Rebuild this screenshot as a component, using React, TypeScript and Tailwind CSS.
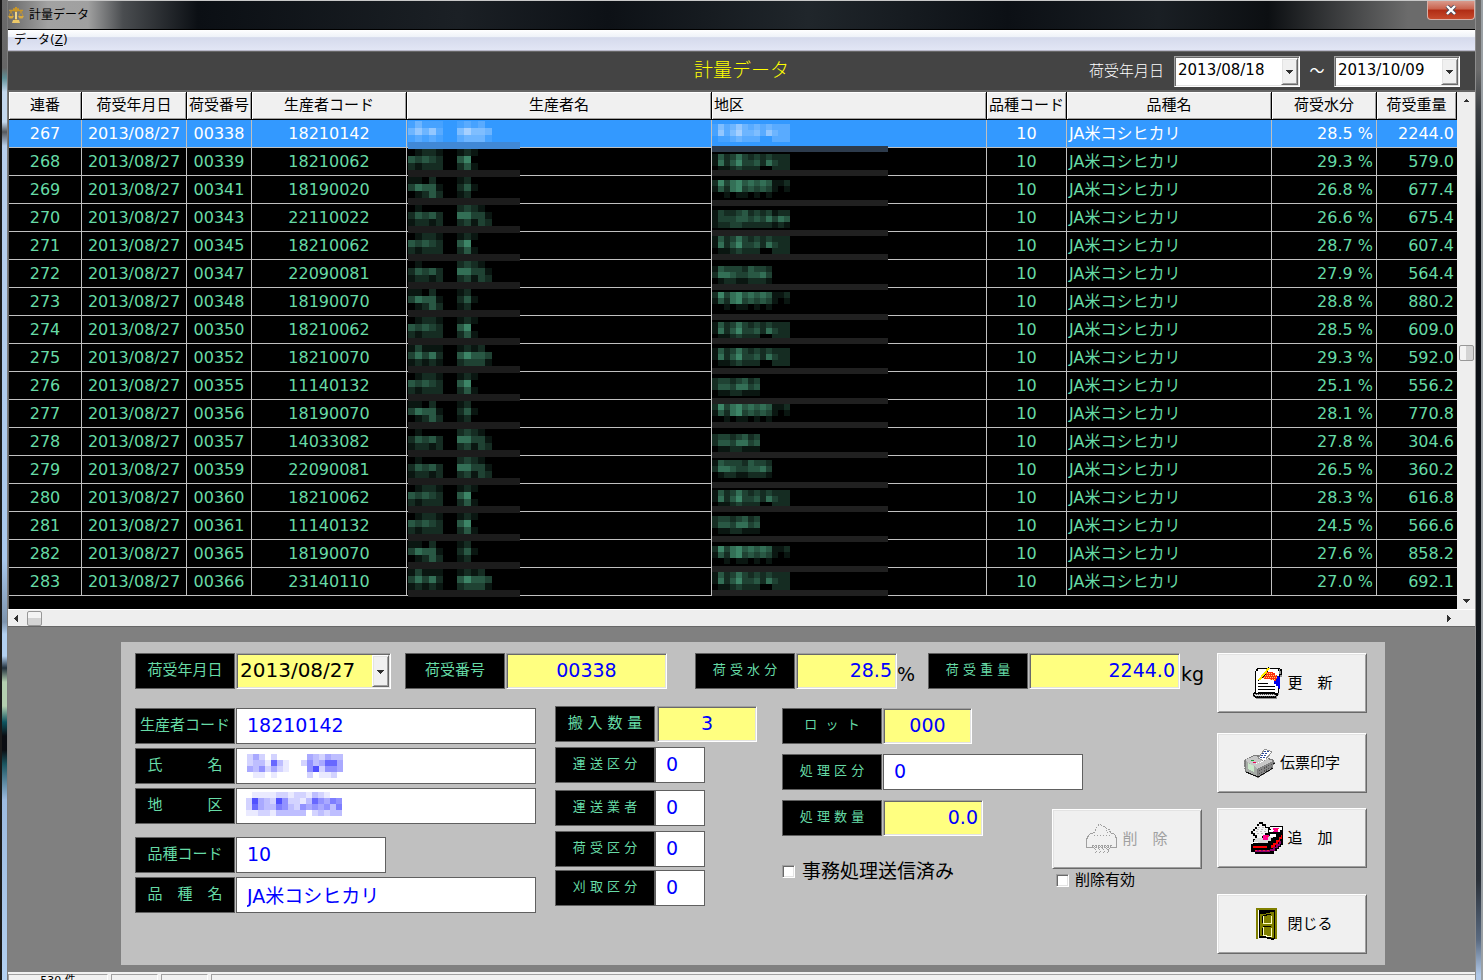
import type { ReactNode } from "react";

const rows = [
  { no: 267, code: "00338", producer: "18210142", moisture: "28.5", weight: "2244.0", name: "b", area: "long" },
  { no: 268, code: "00339", producer: "18210062", moisture: "29.3", weight: "579.0", name: "a", area: "long" },
  { no: 269, code: "00341", producer: "18190020", moisture: "26.8", weight: "677.4", name: "c", area: "mid" },
  { no: 270, code: "00343", producer: "22110022", moisture: "26.6", weight: "675.4", name: "d", area: "wide" },
  { no: 271, code: "00345", producer: "18210062", moisture: "28.7", weight: "607.4", name: "a", area: "long" },
  { no: 272, code: "00347", producer: "22090081", moisture: "27.9", weight: "564.4", name: "d", area: "semi" },
  { no: 273, code: "00348", producer: "18190070", moisture: "28.8", weight: "880.2", name: "c", area: "mid" },
  { no: 274, code: "00350", producer: "18210062", moisture: "28.5", weight: "609.0", name: "a", area: "long" },
  { no: 275, code: "00352", producer: "18210070", moisture: "29.3", weight: "592.0", name: "b", area: "long" },
  { no: 276, code: "00355", producer: "11140132", moisture: "25.1", weight: "556.2", name: "a", area: "short" },
  { no: 277, code: "00356", producer: "18190070", moisture: "28.1", weight: "770.8", name: "c", area: "mid" },
  { no: 278, code: "00357", producer: "14033082", moisture: "27.8", weight: "304.6", name: "d", area: "short" },
  { no: 279, code: "00359", producer: "22090081", moisture: "26.5", weight: "360.2", name: "d", area: "semi" },
  { no: 280, code: "00360", producer: "18210062", moisture: "28.3", weight: "616.8", name: "a", area: "long" },
  { no: 281, code: "00361", producer: "11140132", moisture: "24.5", weight: "566.6", name: "a", area: "short" },
  { no: 282, code: "00365", producer: "18190070", moisture: "27.6", weight: "858.2", name: "c", area: "mid" },
  { no: 283, code: "00366", producer: "23140110", moisture: "27.0", weight: "692.1", name: "b", area: "long" },
];

// Masked text: every digit is the strength of one cell
const masks: Record<string, string[]> = {
  a: ["012210012100", "434320046000", "212220024100"],
  b: ["131110012120", "353520046443", "121210023331"],
  c: ["110200012000", "354410024100", "012420012000"],
  d: ["010000023210", "243420055331", "122120023132"],
  long: ["1423532323222", "1524633425322", "0112322200222"],
  mid: ["2635645454112", "1425634343101", "0010110101000"],
  wide: ["1322342323122", "1333443435354", "1223322222121"],
  semi: ["1433324332", "2554334453", "0122112221"],
  short: ["23323423", "24435534", "01122111"],
  nameField: ["2420200000432433", "2331731002534774", "4352421000582554", "0110100000201120"],
  areaField: ["0111122122132100", "2843285221375465", "2743365325454536", "1122133333023233"],
};

const columns = [
  { title: "連番", width: "w-[73px]" },
  { title: "荷受年月日", width: "w-[105px]" },
  { title: "荷受番号", width: "w-[65px]" },
  { title: "生産者コード", width: "w-[155px]" },
  { title: "生産者名", width: "" },
  { title: "地区", width: "w-[275px]" },
  { title: "品種コード", width: "w-[80px]" },
  { title: "品種名", width: "w-[205px]" },
  { title: "荷受水分", width: "w-[105px]" },
  { title: "荷受重量", width: "w-[80px]" },
];

const sunken =
  "border border-t-[#a0a0a0] border-l-[#a0a0a0] border-r-white border-b-white shadow-[inset_1px_1px_0_#696969,inset_-1px_-1px_0_#e3e3e3]";
const raised =
  "border border-t-white border-l-white border-r-[#696969] border-b-[#696969] shadow-[inset_1px_1px_0_#e3e3e3,inset_-1px_-1px_0_#a0a0a0]";

const Mosaic = ({ mask, size, color, top = 0 }: { mask: string; size: number; color: string; top?: number }) => (
  <g fill={color}>
    {masks[mask].flatMap((line, y) =>
      line.split("").map((v, x) =>
        v === "0" ? null : (
          <rect key={`${x}-${y}`} x={x * size} y={top + y * size} width={size} height={size} opacity={Number(v) / 9} />
        )
      )
    )}
  </g>
);

const MaskedName = ({ mask, selected }: { mask: string; selected: boolean }) => (
  <svg width="112" height="29" className="absolute left-px top-0 overflow-visible" shapeRendering="crispEdges">
    <Mosaic mask={mask} size={7} top={1} color={selected ? "#e0ecff" : "#5cc79a"} />
    <rect y="22" width="112" height="7" fill={selected ? "#4088d6" : "#1c1c1c"} />
  </svg>
);

const MaskedArea = ({ mask, index }: { mask: string; index: number }) => (
  <svg width="176" height="33" className="absolute left-0 top-0 overflow-visible" shapeRendering="crispEdges">
    <Mosaic mask={mask} size={6} top={4 + 2 * (index % 2)} color={index === 0 ? "#e0ecff" : "#5cc79a"} />
    <rect y={27 - ((145 + 28 * index) % 6)} width="176" height="6" fill={index === 0 ? "#2d3b4c" : "#202020"} />
  </svg>
);

const ScaleIcon = () => (
  <svg width="16" height="16" viewBox="0 0 16 16" fill="none" stroke="#c8962a">
    <path d="M8 0v14" strokeWidth="2" />
    <path d="M1 3.500h14M5 2h6" strokeWidth="1.500" />
    <path d="M3 4L1 9M3 4l2 5M13 4l-2 5M13 4l2 5" strokeWidth="0.8" />
    <path d="M0 9h6l-1.500 2.500h-3zM10 9h6l-1.500 2.500h-3z" fill="#d9a93c" stroke="none" />
    <path d="M5 13h6l1 3H4z" fill="#ecc868" stroke="none" />
    <path d="M7 5h2v7H7z" fill="#f1d68a" stroke="none" />
  </svg>
);

const UpdateIcon = () => (
  <svg width="32" height="32" viewBox="0 0 32 32" shapeRendering="crispEdges">
    <path d="M8 3h23v7h-3v18h-2v5H5v-3H2v-3h3V4h1z" fill="#909090" />
    <path d="M6 1h23v1h2v6h-2v2h-1v16h-1v3h-2v2H4v-1H3v-1H2v-3h1v-1h1V4h1V2h1z" fill="#000" />
    <path d="M7 2h20v2h1v22h-2V26H5V4h2z" fill="#fff" />
    <path d="M28 2h1v2h1v3h-2z" fill="#909090" />
    <path d="M3 27h21v1h1v1H4z" fill="#c0c0c0" />
    <path d="M5 27.500h19M5 29.500h19" stroke="#444" strokeDasharray="1 1" />
    <path d="M4 28.500h20" stroke="#eee" />
    <path d="M7 16.500h10M7 19.500h17M7 22.500h17M7 25.500h17" stroke="#000" />
    <path d="M27 9v17" stroke="#000" />
    <path d="M13 5h9v1h2v2h2v2h1v4h-4v-1h-4v-1h-6v-1h-2V9h1V7h1z" fill="#ff2a10" />
    <path d="M14 6.500h8M12 8.500h14M11 10.500h15M19 12.500h7" stroke="#ffd860" strokeDasharray="1 1" />
    <path d="M26 9h2v1h1v12h-1v-1h-1v-2h-2v-2h-2v-3h2v-2h1z" fill="#0000f0" />
    <path d="M7 14L18 0M10 12L17 4" stroke="#000" strokeWidth="1" />
    <path d="M8 13L18 1" stroke="#ffe800" strokeWidth="2" />
  </svg>
);

const PrinterIcon = () => (
  <svg width="32" height="32" viewBox="0 0 32 32" shapeRendering="crispEdges">
    <path d="M0 13l10-5h7l13 5v2l2 1-3 2v4l-15 9L1 25z" fill="#7c7c7c" />
    <path d="M1 13l9-4 12 2 7 3-16 8L4 16z" fill="#c8c8c8" />
    <path d="M2 14l11 7v8L2 24z" fill="#a8aca8" />
    <path d="M4 16l6 3v6l-6-3z" fill="#c9e8c9" />
    <path d="M14 22l15-8v7l-15 9z" fill="#858585" />
    <path d="M15 24l13-7M15 27l13-7" stroke="#555" strokeDasharray="1 1" />
    <path d="M14 11l7-9 7 3-8 9z" fill="#fff" stroke="#909090" />
    <path d="M20 4.500h5M18 6.500h6M17 8.500h5M16 10.500h5" stroke="#2a4a9a" strokeWidth="1" strokeDasharray="2 1" />
    <path d="M2 25l12 5 15-9M29 17l2-1" stroke="#111" fill="none" />
    <path d="M0 13v10" stroke="#888" strokeDasharray="1 1" />
    <path d="M7 13h3v1H7z" fill="#18a030" />
    <path d="M9 15h3v1H9z" fill="#f00050" />
    <path d="M12 17l7-3 6-3" stroke="#fff" fill="none" strokeDasharray="1 1" />
  </svg>
);

const AddIcon = () => (
  <svg width="32" height="32" viewBox="0 0 32 32" shapeRendering="crispEdges">
    <path d="M8 0h4v2h3v3h4V4h13v19h-2v2h-2v2h-2v2h-3v3H4v-2H0v-8h2v-5h2v-3H2v-2H0V9h2V7h2V5h2V2h2z" fill="#000" />
    <path d="M8 2h3v2h3v2h3v5h-3v3h-3v2H6v-3H4v-2H2V9h2V7h2V4h2z" fill="#f4f4f4" />
    <path d="M7 5.500h7M6 7.500h9M5 9.500h11M6 11.500h7" stroke="#c0c0c0" strokeDasharray="2 2" />
    <path d="M19 5h12v3h-2v2H18V8h2z" fill="#fff" />
    <path d="M22 6h6v1h-1v3h-5V9h1z" fill="#ff0090" />
    <path d="M4 16h8v-2h10v2h-2v3h-3v2H3v-3h1z" fill="#d8d8d8" />
    <path d="M12 13h6v2h-1v3h-5z" fill="#ff0090" />
    <path d="M15 14h2v1h-2zM25 7h2v1h-2z" fill="#f22" />
    <path d="M2 20h5v1H2zM19 12h6v3h-6z" fill="#fff" />
    <path d="M2 24h14v2H2zM20 23h2v-2h3v-3h3v-3h2v-2h1v4h-2v3h-2v3h-3v3h-4z" fill="#f00" />
    <path d="M4 28h15v2H4zM19 27h3v-2h3v-3h3v-3h2v3h-1v2h-2v2h-3v3h-5z" fill="#900070" />
    <path d="M4 28.500h14" stroke="#f02040" strokeDasharray="2 2" />
  </svg>
);

const DoorIcon = () => (
  <svg width="32" height="32" viewBox="0 0 32 32" shapeRendering="crispEdges">
    <path d="M5 0h21v31h-2V2H7v29H5z" fill="#808000" />
    <path d="M7 2h17v29h-1v1h-3v-1h-4v-1H8z" fill="#000" />
    <path d="M7 2h1v28H7z" fill="#fff" />
    <path d="M9 6h6V5h4V4h4v26h-3v-1h-4v-1H9z" fill="#808000" />
    <path d="M11.500 8v7M11.500 7.500h4M15 6.500h5M11.500 20v7M12 18.500h8" fill="none" stroke="#000" />
    <path d="M12 15.500h8.500v-8M12 8v8M12 27.500h3v1h5.500v-9M12 19v9" fill="none" stroke="#ffffc0" />
  </svg>
);

const ShredderIcon = () => (
  <svg width="32" height="32" viewBox="0 0 32 32" fill="none" stroke="#a0a0a0" shapeRendering="crispEdges">
    <path d="M7.500 10.500L12.500 1.500h2l10 6v3" strokeDasharray="2 1" />
    <path d="M7 10.500H4.500l-2 2-2 4v8h5M25 10.500h2.500l2 2 1 4v8h-5" />
    <path d="M8 12.500h16M20 7.500h3v2h-3" strokeDasharray="1 2" />
    <path d="M6 22.500h20M6 24.500h20" strokeDasharray="2 1" />
    <path d="M6 23.500h20" strokeDasharray="1 1" />
    <path d="M8 25l3 3-3 3M12 25l3 3-3 3M16 25l3 3-3 3M20 25l3 3-3 3M24 25l-2 3 3 3" strokeDasharray="1 1" />
  </svg>
);

const Arrow = ({ d, className = "" }: { d: string; className?: string }) => (
  <svg width="9" height="9" viewBox="0 0 9 9" className={className} fill="#303030" shapeRendering="crispEdges">
    <path d={d} />
  </svg>
);

const DateSelect = ({ id, value, className, selectClass }: { id: string; value: string; className: string; selectClass: string }) => (
  <div className={`relative flex ${sunken} ${className}`}>
    <select id={id} defaultValue={value} className={`w-full appearance-none bg-transparent pl-[3px] text-black outline-none ${selectClass}`}>
      <option>{value}</option>
    </select>
    <span className={`pointer-events-none absolute bottom-px right-px top-px flex w-[17px] items-center justify-center bg-[#f0f0f0] ${raised}`}>
      <Arrow d="M1 3h7v1H7v1H6v1H5v1H4V6H3V5H2V4H1z" />
    </span>
  </div>
);

type FieldProps = {
  id: string;
  label: string;
  value?: string;
  small?: boolean;
  yellow?: boolean;
  gap?: string;
  width: string;
  align?: string;
  children?: ReactNode;
};

const FieldLabel = ({ id, label, small }: { id: string; label: string; small?: boolean }) => (
  <label
    htmlFor={id}
    className={`flex h-9 w-[100px] shrink-0 items-center justify-center whitespace-pre border border-[#606060] bg-black pb-[2px] text-[#66dba6] ${
      small ? "text-[13px]" : "text-[15px]"
    }`}
  >
    {label}
  </label>
);

const Field = ({ id, label, value = "", small, yellow, gap = "gap-px", width, align = "px-[10px]", children }: FieldProps) => (
  <div className={`flex ${gap}`}>
    <FieldLabel id={id} label={label} small={small} />
    <div className={`relative ${width}`}>
      <input
        id={id}
        defaultValue={value}
        className={`h-9 w-full pb-[2px] text-[19px] text-[#0000ff] outline-none ${align} ${
          yellow ? `bg-[#ffff80] ${sunken}` : "border border-[#606060] bg-white"
        }`}
      />
      {children}
    </div>
  </div>
);

const ActionButton = ({ icon, label, disabled, className = "" }: { icon: ReactNode; label: string; disabled?: boolean; className?: string }) => (
  <button
    disabled={disabled}
    className={`flex h-[60px] w-[150px] items-center justify-center gap-1 whitespace-pre bg-[#f0f0f0] text-[15px] ${
      disabled ? "text-[#a0a0a0]" : "text-black"
    } ${raised} ${className}`}
  >
    {icon}
    {label}
  </button>
);

const Check = ({ id, label, className }: { id: string; label: string; className: string }) => (
  <div className={`flex items-center ${className}`}>
    <input id={id} type="checkbox" className={`size-[13px] appearance-none bg-white ${sunken}`} />
    <label htmlFor={id}>{label}</label>
  </div>
);

const TitleBar = () => (
  <header className="flex h-[29px] shrink-0 items-start justify-between border-t border-[#c8c8c8] bg-[linear-gradient(90deg,#6a6a6a_0,#a2a2a2_40px,#a0a0a0_80px,#4a4d50_115px,#0b0f14_190px,#1b2025_450px,#0d1116_600px,#20262b_800px,#0c1015_1000px,#1a1f24_1150px,#0c0f12_1260px,#6b6b6b_1400px,#6b6b6b_100%)]">
    <div className="flex h-[28px] items-center gap-[5px] text-[12px] text-black">
      <ScaleIcon />
      <h1>計量データ</h1>
    </div>
    <button
      aria-label="閉じる"
      className="flex h-[19px] w-[48px] items-center justify-center rounded-b-[4px] border border-t-0 border-[#d8b0a8] bg-[linear-gradient(180deg,#d99a8c_0,#c9614c_45%,#b02c14_50%,#c64a2c_100%)]"
    >
      <svg width="12" height="10" viewBox="0 0 12 10">
        <path d="M2 1l8 8M10 1L2 9" stroke="#4a4a5a" strokeWidth="4" />
        <path d="M2 1l8 8M10 1L2 9" stroke="#fff" strokeWidth="2.400" />
      </svg>
    </button>
  </header>
);

const RecordTable = () => (
  <table className="w-full table-fixed border-separate border-spacing-0">
    <thead>
      <tr>
        {columns.map((c) => (
          <th
            key={c.title}
            className={`h-7 whitespace-nowrap border-b border-r border-black bg-[#f0f0f0] p-0 pb-[2px] text-[15px] font-normal leading-5 text-black shadow-[inset_1px_1px_0_#fff,inset_-1px_-1px_0_#a0a0a0] ${c.width} ${
              c.title === "地区" ? "pl-[2px] text-left" : "text-center"
            }`}
          >
            {c.title}
          </th>
        ))}
      </tr>
    </thead>
    <tbody>
      {rows.map((r, i) => (
        <tr
          key={r.no}
          className={`text-center text-[16px] leading-5 [&>td:last-child]:border-r-0 [&>td]:h-7 [&>td]:whitespace-nowrap [&>td]:border-b [&>td]:border-r [&>td]:border-[#c0c0c0] [&>td]:p-0 ${
            i === 0 ? "bg-[#3399ff] text-white" : "bg-black text-[#66dba6]"
          }`}
        >
          <td>{r.no}</td>
          <td>2013/08/27</td>
          <td>{r.code}</td>
          <td>{r.producer}</td>
          <td className="relative">
            <MaskedName mask={r.name} selected={i === 0} />
          </td>
          <td className="relative">
            <MaskedArea mask={r.area} index={i} />
          </td>
          <td>10</td>
          <td className="text-left">
            <span className="pl-[2px]">JA米コシヒカリ</span>
          </td>
          <td className="text-right">
            <span className="pr-[3px]">{r.moisture} %</span>
          </td>
          <td className="text-right">
            <span className="pr-[3px]">{r.weight}</span>
          </td>
        </tr>
      ))}
    </tbody>
  </table>
);

const DetailForm = () => (
  <form className="flex justify-between bg-[#c0c0c0] pb-[11px] pl-[14px] pr-[18px] pt-[11px]">
    <div className="flex flex-col gap-[17px]">
      <div className="flex items-start">
        <div className="flex gap-px">
          <FieldLabel id="date" label="荷受年月日" />
          <DateSelect id="date" value="2013/08/27" className="h-9 w-[155px] bg-[#ffff80]" selectClass="pb-[2px] text-[20px]" />
        </div>
        <div className="ml-[14px]">
          <Field id="number" label="荷受番号" value="00338" yellow width="w-[161px]" align="text-center" />
        </div>
        <div className="ml-7 flex">
          <Field id="moisture" label="荷 受 水 分" value="28.5" small yellow width="w-[101px]" align="pr-1 text-right" />
          <span className="w-[31px] pt-[7px] text-[19px]">%</span>
        </div>
        <div className="flex">
          <Field id="weight" label="荷 受 重 量" value="2244.0" small yellow width="w-[151px]" align="pr-1 text-right" />
          <span className="pl-px pt-[7px] text-[19px]">kg</span>
        </div>
      </div>

      <div className="flex items-start">
        <div className="flex w-[401px] flex-col gap-1 pt-[2px]">
          <Field id="producer" label="生産者コード" value="18210142" width="w-[300px]" />
          <Field id="name" label="氏　　　名" width="w-[300px]">
            <svg width="96" height="24" className="absolute left-[11px] top-[6px]" shapeRendering="crispEdges">
              <Mosaic mask="nameField" size={6} color="#3c3cff" />
            </svg>
          </Field>
          <Field id="area" label="地　　　区" width="w-[300px]">
            <svg width="96" height="24" className="absolute left-[10px] top-1" shapeRendering="crispEdges">
              <Mosaic mask="areaField" size={6} color="#3c3cff" />
            </svg>
          </Field>
          <div className="mt-[9px] flex flex-col gap-1">
            <Field id="variety-code" label="品種コード" value="10" width="w-[150px]" />
            <Field id="variety" label="品　種　名" value="JA米コシヒカリ" width="w-[300px]" />
          </div>
        </div>

        <div className="ml-[19px] flex w-[202px] flex-col gap-[5px]">
          <Field id="carried" label="搬 入 数 量" value="3" yellow gap="gap-[2px]" width="w-[100px]" align="text-center" />
          <Field id="carry-type" label="運 送 区 分" value="0" small gap="gap-0" width="w-[50px]" />
          <div className="mt-[2px]">
            <Field id="carrier" label="運 送 業 者" value="0" small gap="gap-0" width="w-[50px]" />
          </div>
          <div className="flex flex-col gap-[3px]">
            <Field id="receive-type" label="荷 受 区 分" value="0" small gap="gap-0" width="w-[50px]" />
            <Field id="reap-type" label="刈 取 区 分" value="0" small gap="gap-0" width="w-[50px]" />
          </div>
        </div>

        <div className="ml-[25px] flex w-[420px] flex-col gap-[10px] pt-[2px]">
          <Field id="lot" label="ロ  ッ  ト" value="000" small yellow width="w-[89px]" align="text-center" />
          <Field id="process-type" label="処 理 区 分" value="0" small width="w-[200px]" />
          <div className="flex items-start justify-between">
            <div>
              <Field id="process-count" label="処 理 数 量" value="0.0" small yellow width="w-[100px]" align="pr-1 text-right" />
              <Check id="sent" label="事務処理送信済み" className="mt-[21px] gap-[7px] text-[19px] leading-7" />
            </div>
            <div className="pt-[9px]">
              <ActionButton icon={<ShredderIcon />} label="削　除" disabled />
              <Check id="deletable" label="削除有効" className="gap-[6px] pl-1 text-[15px] leading-[22px]" />
            </div>
          </div>
        </div>
      </div>
    </div>

    <div className="flex flex-col">
      <ActionButton icon={<UpdateIcon />} label="更　新" />
      <ActionButton icon={<PrinterIcon />} label="伝票印字" className="mt-5" />
      <ActionButton icon={<AddIcon />} label="追　加" className="mt-[15px]" />
      <ActionButton icon={<DoorIcon />} label="閉じる" className="mt-[26px]" />
    </div>
  </form>
);

const App = () => {
  return (
    <div className="flex h-screen flex-col overflow-hidden bg-black font-['DejaVu_Sans','Noto_Sans_CJK_JP',sans-serif] text-black">
      <div className="flex min-h-0 flex-1">
        <div className="w-2 shrink-0 border-l-2 border-r border-l-[#1a1a1a] border-r-[#7c7c7c] bg-[linear-gradient(180deg,#6b6b6b_0,#666_68px,#5f8f96_78px,#c4d8ee_92px,#c4d8ee_122px,#55595e_132px,#b8cfec_146px,#a9c8ec_560px,#7d94ae_622px,#b3d0f0_634px,#b3d0f0_656px,#22303c_668px,#b4cfb0_682px,#b4cfb0_706px,#0f5560_722px,#0a0d12_736px,#0a0d12_750px,#1a5560_764px,#9dbbe0_800px,#b3d0f0_980px)]" />
        <div className="flex min-w-0 flex-1 flex-col">
          <TitleBar />
          <nav className="flex h-[22px] shrink-0 items-center border-b border-t border-b-[#b8b8c8] border-t-black bg-[linear-gradient(180deg,#fff_0,#eef2f8_35%,#d5daec_38%,#e2e6f5_100%)]">
            <button className="px-[6px] text-[12px] text-black">
              データ(<u>Z</u>)
            </button>
          </nav>

          <section className="grid h-[41px] shrink-0 grid-cols-[1fr_auto_1fr] items-center border-b-2 border-t border-[#666] bg-[#444] px-[15px] text-white">
            <span />
            <h2 className="pb-px text-[19px] font-light text-[#ffff00]">計量データ</h2>
            <div className="flex items-center justify-end text-[15px]">
              <label htmlFor="from" className="mr-[10px] font-light">
                荷受年月日
              </label>
              <DateSelect id="from" value="2013/08/18" className="h-[31px] w-[126px] bg-white" selectClass="pb-[2px]" />
              <span className="w-[34px] text-center">～</span>
              <DateSelect id="to" value="2013/10/09" className="h-[31px] w-[126px] bg-white" selectClass="pb-[2px]" />
            </div>
          </section>

          <section className="flex shrink-0 border-l border-[#666] bg-black">
            <div className="flex-1 pb-[13px]">
              <RecordTable />
            </div>
            <div className="flex w-[18px] flex-col items-center justify-between bg-[#eee] py-1">
              <Arrow d="M4 3h1v1h1v1h1v1H2V5h1V4h1z" />
              <span className="mt-[240px] h-4 w-[15px] rounded-[2px] border border-[#979797] bg-[linear-gradient(90deg,#f4f4f4_50%,#d4d4d4_50%)]" />
              <span className="flex-1" />
              <Arrow d="M1 3h7v1H7v1H6v1H5v1H4V6H3V5H2V4H1z" />
            </div>
          </section>
          <div className="flex h-[18px] shrink-0 items-center border-b border-t border-b-[#666] border-t-white bg-[#eee] pl-1 pr-[22px]">
            <Arrow d="M5 1h1v7H5V7H4V6H3V5H2V4h1V3h1V2h1z" />
            <span className="ml-[6px] h-[15px] w-[15px] rounded-[2px] border border-[#979797] bg-[linear-gradient(180deg,#f4f4f4_50%,#d4d4d4_50%)]" />
            <Arrow className="ml-auto" d="M3 1h1v1h1v1h1v1h1v1H6v1H5v1H4v1H3z" />
          </div>

          <main className="shrink-0 bg-[#808080] pb-[7px] pl-[113px] pr-[90px] pt-[15px]">
            <DetailForm />
          </main>

          <footer className="flex h-6 shrink-0 gap-[3px] border-t-2 border-[#f0f0f0] bg-[#f0f0f0] text-[11px] leading-3">
            <span className="w-[100px] border-l border-r border-t border-[#a0a0a0] border-r-white text-center">530 件</span>
            <span className="w-[47px] border-l border-r border-t border-[#a0a0a0] border-r-white" />
            <span className="w-[47px] border-l border-r border-t border-[#a0a0a0] border-r-white" />
            <span className="flex-1 border-l border-t border-[#a0a0a0]" />
          </footer>
        </div>
        <div className="w-2 shrink-0 border-l border-r-2 border-l-[#8c8c8c] border-r-[#9aa0a4] bg-[linear-gradient(180deg,#6b6b6b_0,#6b6b6b_70px,#3c4044_110px,#10151a_200px,#0a0d12_300px,#14191e_690px,#2a3038_880px,#5a6a80_940px,#b0c8e8_975px)]" />
      </div>
    </div>
  );
};

export default App;
